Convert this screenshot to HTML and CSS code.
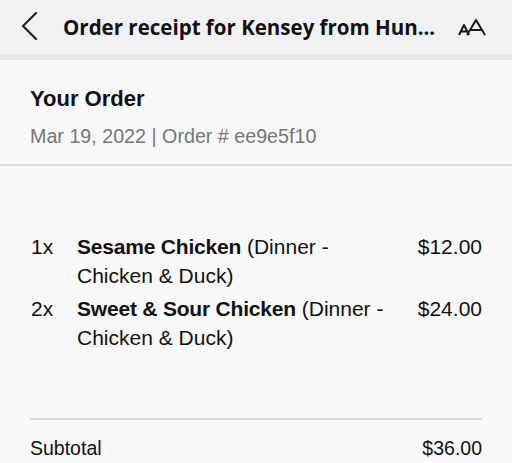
FILE: index.html
```html
<!DOCTYPE html>
<html>
<head>
<meta charset="utf-8">
<link rel="stylesheet" href="styles.css">
</head>
<body>
<header class="topbar">
  <svg class="back" width="20" height="30" viewBox="0 0 20 30"><polyline points="15,1 2,14 15,27" fill="none" stroke="#222" stroke-width="2.2" stroke-linecap="round" stroke-linejoin="round"/></svg>
  <h1 class="title">Order receipt for Kensey from Hun...</h1>
  <svg class="aa" width="30" height="18" viewBox="0 0 30 18"><path d="M1 16 L6 6 L11 16 M3 12.5 H9" fill="none" stroke="#1a1a1a" stroke-width="2" stroke-linejoin="round"/><path d="M9 16 L18 1 L27 16 M12.2 11 H23.8" fill="none" stroke="#1a1a1a" stroke-width="2" stroke-linejoin="round"/></svg>
</header>
<div class="band"></div>
<main class="content">
  <section class="summary">
    <h2 class="heading">Your Order</h2>
    <p class="meta">Mar 19, 2022 | Order # ee9e5f10</p>
  </section>
  <section class="items">
    <div class="item">
      <span class="qty">1x</span>
      <span class="name"><b>Sesame Chicken</b> (Dinner - <span class="opt">Chicken &amp; Duck)</span></span>
      <span class="price">$12.00</span>
    </div>
    <div class="item">
      <span class="qty">2x</span>
      <span class="name"><b>Sweet &amp; Sour Chicken</b> (Dinner - <span class="opt">Chicken &amp; Duck)</span></span>
      <span class="price">$24.00</span>
    </div>
  </section>
  <section class="totals">
    <div class="row"><span>Subtotal</span><span>$36.00</span></div>
  </section>
</main>
</body>
</html>
```

FILE: styles.css
```css
html, body {
  margin: 0;
  padding: 0;
  background: #f8f8f8;
}
body {
  width: 512px;
  height: 463px;
  overflow: hidden;
  font-family: "Liberation Sans", Arial, sans-serif;
  color: #111;
}
.topbar {
  height: 54px;
  background: #f1f1f3;
  display: flex;
  align-items: center;
  box-sizing: border-box;
  padding: 0 24px 0 21px;
}
.back {
  display: block;
  margin-top: -1px;
  flex: none;
}
.title {
  flex: 1;
  margin: 0 0 0 22px;
  font-family: "Open Sans", sans-serif;
  font-weight: 700;
  font-size: 20.5px;
  color: #111;
  white-space: nowrap;
}
.aa {
  display: block;
  flex: none;
  margin-top: 1px;
}
.band {
  height: 6px;
  background: #e7e7e9;
}
.content {
  background: #f8f8f8;
}
.summary {
  padding: 26px 30px 17px;
  border-bottom: 2px solid #dcdcdc;
}
.heading {
  margin: 0;
  font-size: 22px;
  font-weight: 700;
  line-height: 26px;
  color: #111;
}
.meta {
  margin: 13px 0 0;
  font-size: 19.7px;
  line-height: 22px;
  color: #767676;
}
.items {
  padding: 66px 30px 0;
  display: flex;
  flex-direction: column;
  gap: 4px;
}
.item {
  display: grid;
  grid-template-columns: 37px 1fr auto;
  column-gap: 10px;
  font-size: 21px;
  line-height: 29px;
  color: #111;
}
.qty {
  padding-left: 1px;
}
.name b {
  font-weight: 700;
  letter-spacing: -0.2px;
}
.opt {
  white-space: nowrap;
}
.price {
  text-align: right;
}
.totals {
  margin: 66px 30px 0;
  border-top: 2px solid #d8d8d8;
  padding-top: 15px;
}
.row {
  display: flex;
  justify-content: space-between;
  font-size: 19.5px;
  line-height: 26px;
  color: #111;
}
```
